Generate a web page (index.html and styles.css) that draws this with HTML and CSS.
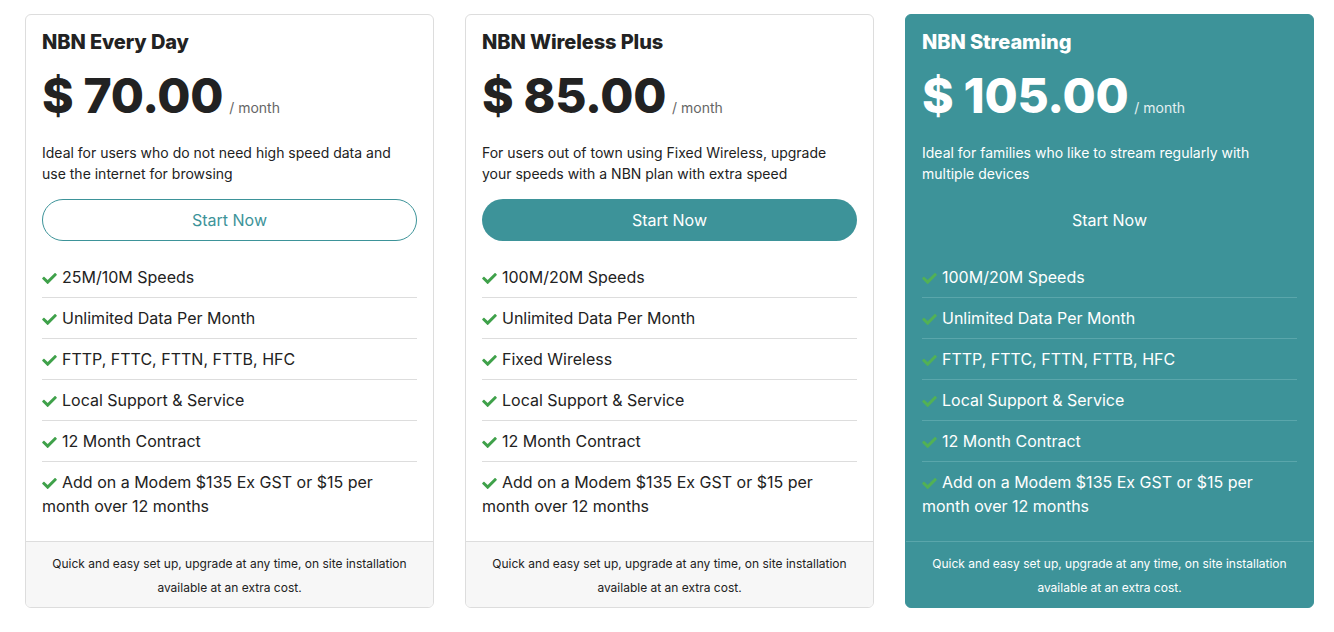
FILE: index.html
```html
<!DOCTYPE html>
<html>
<head>
<meta charset="utf-8">
<link rel="stylesheet" href="styles.css">
</head>
<body>
<div class="plans">
  <div class="card">
    <div class="card-body">
      <h3 class="title">NBN Every Day</h3>
      <div class="price"><span class="amount">$ 70.00</span><span class="per">/ month</span></div>
      <p class="desc">Ideal for users who do not need high speed data and use the internet for browsing</p>
      <a class="btn btn-outline">Start Now</a>
      <ul class="features">
        <li><span class="check"><svg viewBox="0 64 512 384"><path d="M173.9 439.4l-166.4-166.4c-10-10-10-26.2 0-36.2l36.2-36.2c10-10 26.2-10 36.2 0L192 312.7 432.1 72.6c10-10 26.2-10 36.2 0l36.2 36.2c10 10 10 26.2 0 36.2L210.1 439.4c-10 10-26.2 10-36.2 0z"/></svg></span>25M/10M Speeds</li>
        <li><span class="check"><svg viewBox="0 64 512 384"><path d="M173.9 439.4l-166.4-166.4c-10-10-10-26.2 0-36.2l36.2-36.2c10-10 26.2-10 36.2 0L192 312.7 432.1 72.6c10-10 26.2-10 36.2 0l36.2 36.2c10 10 10 26.2 0 36.2L210.1 439.4c-10 10-26.2 10-36.2 0z"/></svg></span>Unlimited Data Per Month</li>
        <li><span class="check"><svg viewBox="0 64 512 384"><path d="M173.9 439.4l-166.4-166.4c-10-10-10-26.2 0-36.2l36.2-36.2c10-10 26.2-10 36.2 0L192 312.7 432.1 72.6c10-10 26.2-10 36.2 0l36.2 36.2c10 10 10 26.2 0 36.2L210.1 439.4c-10 10-26.2 10-36.2 0z"/></svg></span>FTTP, FTTC, FTTN, FTTB, HFC</li>
        <li><span class="check"><svg viewBox="0 64 512 384"><path d="M173.9 439.4l-166.4-166.4c-10-10-10-26.2 0-36.2l36.2-36.2c10-10 26.2-10 36.2 0L192 312.7 432.1 72.6c10-10 26.2-10 36.2 0l36.2 36.2c10 10 10 26.2 0 36.2L210.1 439.4c-10 10-26.2 10-36.2 0z"/></svg></span>Local Support &amp; Service</li>
        <li><span class="check"><svg viewBox="0 64 512 384"><path d="M173.9 439.4l-166.4-166.4c-10-10-10-26.2 0-36.2l36.2-36.2c10-10 26.2-10 36.2 0L192 312.7 432.1 72.6c10-10 26.2-10 36.2 0l36.2 36.2c10 10 10 26.2 0 36.2L210.1 439.4c-10 10-26.2 10-36.2 0z"/></svg></span>12 Month Contract</li>
        <li><span class="check"><svg viewBox="0 64 512 384"><path d="M173.9 439.4l-166.4-166.4c-10-10-10-26.2 0-36.2l36.2-36.2c10-10 26.2-10 36.2 0L192 312.7 432.1 72.6c10-10 26.2-10 36.2 0l36.2 36.2c10 10 10 26.2 0 36.2L210.1 439.4c-10 10-26.2 10-36.2 0z"/></svg></span>Add on a Modem $135 Ex GST or $15 per month over 12 months</li>
      </ul>
    </div>
    <div class="card-foot">Quick and easy set up, upgrade at any time, on site installation available at an extra cost.</div>
  </div>

  <div class="card">
    <div class="card-body">
      <h3 class="title">NBN Wireless Plus</h3>
      <div class="price"><span class="amount">$ 85.00</span><span class="per">/ month</span></div>
      <p class="desc">For users out of town using Fixed Wireless, upgrade your speeds with a NBN plan with extra speed</p>
      <a class="btn btn-solid">Start Now</a>
      <ul class="features">
        <li><span class="check"><svg viewBox="0 64 512 384"><path d="M173.9 439.4l-166.4-166.4c-10-10-10-26.2 0-36.2l36.2-36.2c10-10 26.2-10 36.2 0L192 312.7 432.1 72.6c10-10 26.2-10 36.2 0l36.2 36.2c10 10 10 26.2 0 36.2L210.1 439.4c-10 10-26.2 10-36.2 0z"/></svg></span>100M/20M Speeds</li>
        <li><span class="check"><svg viewBox="0 64 512 384"><path d="M173.9 439.4l-166.4-166.4c-10-10-10-26.2 0-36.2l36.2-36.2c10-10 26.2-10 36.2 0L192 312.7 432.1 72.6c10-10 26.2-10 36.2 0l36.2 36.2c10 10 10 26.2 0 36.2L210.1 439.4c-10 10-26.2 10-36.2 0z"/></svg></span>Unlimited Data Per Month</li>
        <li><span class="check"><svg viewBox="0 64 512 384"><path d="M173.9 439.4l-166.4-166.4c-10-10-10-26.2 0-36.2l36.2-36.2c10-10 26.2-10 36.2 0L192 312.7 432.1 72.6c10-10 26.2-10 36.2 0l36.2 36.2c10 10 10 26.2 0 36.2L210.1 439.4c-10 10-26.2 10-36.2 0z"/></svg></span>Fixed Wireless</li>
        <li><span class="check"><svg viewBox="0 64 512 384"><path d="M173.9 439.4l-166.4-166.4c-10-10-10-26.2 0-36.2l36.2-36.2c10-10 26.2-10 36.2 0L192 312.7 432.1 72.6c10-10 26.2-10 36.2 0l36.2 36.2c10 10 10 26.2 0 36.2L210.1 439.4c-10 10-26.2 10-36.2 0z"/></svg></span>Local Support &amp; Service</li>
        <li><span class="check"><svg viewBox="0 64 512 384"><path d="M173.9 439.4l-166.4-166.4c-10-10-10-26.2 0-36.2l36.2-36.2c10-10 26.2-10 36.2 0L192 312.7 432.1 72.6c10-10 26.2-10 36.2 0l36.2 36.2c10 10 10 26.2 0 36.2L210.1 439.4c-10 10-26.2 10-36.2 0z"/></svg></span>12 Month Contract</li>
        <li><span class="check"><svg viewBox="0 64 512 384"><path d="M173.9 439.4l-166.4-166.4c-10-10-10-26.2 0-36.2l36.2-36.2c10-10 26.2-10 36.2 0L192 312.7 432.1 72.6c10-10 26.2-10 36.2 0l36.2 36.2c10 10 10 26.2 0 36.2L210.1 439.4c-10 10-26.2 10-36.2 0z"/></svg></span>Add on a Modem $135 Ex GST or $15 per month over 12 months</li>
      </ul>
    </div>
    <div class="card-foot">Quick and easy set up, upgrade at any time, on site installation available at an extra cost.</div>
  </div>

  <div class="card card-featured">
    <div class="card-body">
      <h3 class="title">NBN Streaming</h3>
      <div class="price"><span class="amount">$ 105.00</span><span class="per">/ month</span></div>
      <p class="desc">Ideal for families who like to stream regularly with multiple devices</p>
      <a class="btn btn-plain">Start Now</a>
      <ul class="features">
        <li><span class="check"><svg viewBox="0 64 512 384"><path d="M173.9 439.4l-166.4-166.4c-10-10-10-26.2 0-36.2l36.2-36.2c10-10 26.2-10 36.2 0L192 312.7 432.1 72.6c10-10 26.2-10 36.2 0l36.2 36.2c10 10 10 26.2 0 36.2L210.1 439.4c-10 10-26.2 10-36.2 0z"/></svg></span>100M/20M Speeds</li>
        <li><span class="check"><svg viewBox="0 64 512 384"><path d="M173.9 439.4l-166.4-166.4c-10-10-10-26.2 0-36.2l36.2-36.2c10-10 26.2-10 36.2 0L192 312.7 432.1 72.6c10-10 26.2-10 36.2 0l36.2 36.2c10 10 10 26.2 0 36.2L210.1 439.4c-10 10-26.2 10-36.2 0z"/></svg></span>Unlimited Data Per Month</li>
        <li><span class="check"><svg viewBox="0 64 512 384"><path d="M173.9 439.4l-166.4-166.4c-10-10-10-26.2 0-36.2l36.2-36.2c10-10 26.2-10 36.2 0L192 312.7 432.1 72.6c10-10 26.2-10 36.2 0l36.2 36.2c10 10 10 26.2 0 36.2L210.1 439.4c-10 10-26.2 10-36.2 0z"/></svg></span>FTTP, FTTC, FTTN, FTTB, HFC</li>
        <li><span class="check"><svg viewBox="0 64 512 384"><path d="M173.9 439.4l-166.4-166.4c-10-10-10-26.2 0-36.2l36.2-36.2c10-10 26.2-10 36.2 0L192 312.7 432.1 72.6c10-10 26.2-10 36.2 0l36.2 36.2c10 10 10 26.2 0 36.2L210.1 439.4c-10 10-26.2 10-36.2 0z"/></svg></span>Local Support &amp; Service</li>
        <li><span class="check"><svg viewBox="0 64 512 384"><path d="M173.9 439.4l-166.4-166.4c-10-10-10-26.2 0-36.2l36.2-36.2c10-10 26.2-10 36.2 0L192 312.7 432.1 72.6c10-10 26.2-10 36.2 0l36.2 36.2c10 10 10 26.2 0 36.2L210.1 439.4c-10 10-26.2 10-36.2 0z"/></svg></span>12 Month Contract</li>
        <li><span class="check"><svg viewBox="0 64 512 384"><path d="M173.9 439.4l-166.4-166.4c-10-10-10-26.2 0-36.2l36.2-36.2c10-10 26.2-10 36.2 0L192 312.7 432.1 72.6c10-10 26.2-10 36.2 0l36.2 36.2c10 10 10 26.2 0 36.2L210.1 439.4c-10 10-26.2 10-36.2 0z"/></svg></span>Add on a Modem $135 Ex GST or $15 per month over 12 months</li>
      </ul>
    </div>
    <div class="card-foot">Quick and easy set up, upgrade at any time, on site installation available at an extra cost.</div>
  </div>
</div>
</body>
</html>
```
FILE: styles.css
```css
* { box-sizing: border-box; }
html, body { margin: 0; padding: 0; background: #fff; }
body {
  font-family: Inter, "Noto Sans", "Liberation Sans", sans-serif;
  color: #222;
}
.plans {
  display: grid;
  grid-template-columns: 409px 409px 409px;
  column-gap: 31px;
  padding: 14px 0 0 25px;
}
.card {
  border: 1px solid #dddddd;
  border-radius: 6px;
  display: flex;
  flex-direction: column;
  background: #fff;
  overflow: hidden;
  height: 594px;
}
.card-body {
  padding: 14px 16px 0 16px;
  flex: 1;
}
.title {
  margin: 0;
  font-size: 20px;
  line-height: 26px;
  font-weight: 800;
  color: #222;
  letter-spacing: -0.1px;
}
.price {
  display: flex;
  align-items: baseline;
  margin-top: 11px;
  height: 62px;
}
.amount {
  font-size: 48px;
  line-height: 60px;
  font-weight: 800;
  color: #222;
  letter-spacing: -0.3px;
}
.per {
  font-size: 14px;
  color: #666;
  margin-left: 6px;
}
.desc {
  margin: 14px 0 0 0;
  font-size: 14px;
  line-height: 21px;
  color: #222;
}
.btn {
  display: flex;
  align-items: center;
  justify-content: center;
  height: 42px;
  margin-top: 15px;
  border-radius: 21px;
  font-size: 16px;
  cursor: pointer;
}
.btn-outline {
  border: 1px solid #3d9399;
  color: #3d9399;
}
.btn-solid {
  background: #3d9399;
  color: #fff;
}
.btn-plain {
  color: #fff;
}
.features {
  list-style: none;
  margin: 16px 0 0 0;
  padding: 0;
}
.features li {
  font-size: 16px;
  line-height: 24px;
  padding: 8px 0 8px 0;
  border-bottom: 1px solid #dddddd;
  color: #222;
}
.features li:last-child {
  border-bottom: none;
}
.check {
  display: inline-block;
  width: 15px;
  height: 11px;
  margin-right: 5px;
  vertical-align: -1px;
}
.check svg {
  display: block;
  width: 15px;
  height: 11px;
  fill: #3fa14a;
}
.card-foot {
  background: #f7f7f7;
  border-top: 1px solid #dddddd;
  text-align: center;
  font-size: 12px;
  line-height: 24px;
  padding: 10px 24px 7px;
  color: #222;
}
.card-featured {
  background: #3d9399;
  border-color: #3d9399;
}
.card-featured .title,
.card-featured .amount,
.card-featured .desc,
.card-featured .features li,
.card-featured .card-foot {
  color: #fff;
}
.card-featured .per { color: #e3f0f1; }
.card-featured .features li { border-bottom-color: #5aa6ab; }
.card-featured .card-foot {
  background: #3d9399;
  border-top-color: #5aa6ab;
}
.card-featured .check svg { fill: #52b155; }
```
